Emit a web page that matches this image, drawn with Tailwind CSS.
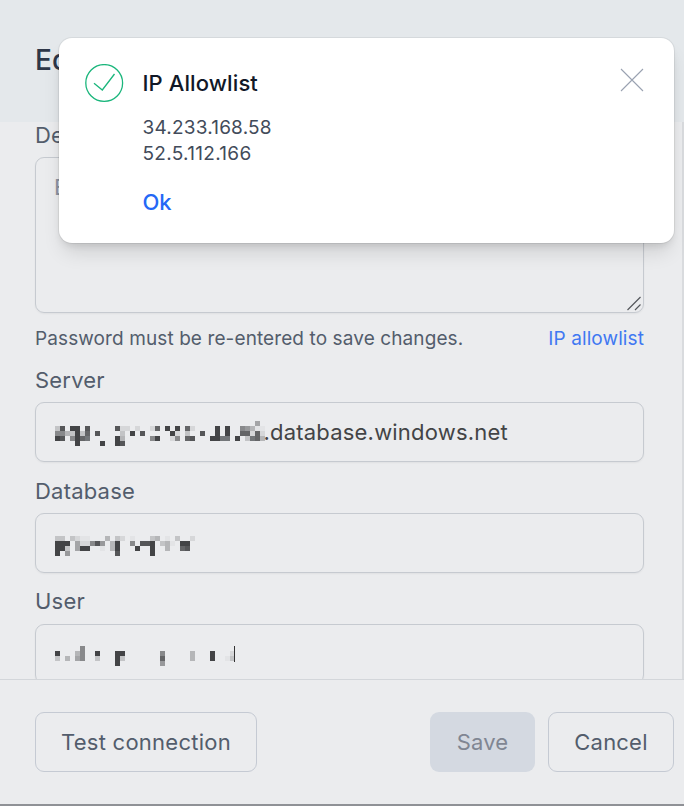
<!DOCTYPE html>
<html lang="en">
<head>
<meta charset="utf-8">
<title>Edit connection</title>
<script src="https://cdn.jsdelivr.net/npm/@tailwindcss/browser@4"></script>
</head>
<body class="relative flex h-[806px] w-[684px] flex-col overflow-hidden bg-[#ebecee] font-['Inter',sans-serif] text-[22px] leading-[30px] tracking-[0.2px] text-[#535d6c]">
  <header class="h-[122px] shrink-0 bg-[#e4e8eb] pl-[35px] pt-[42px]">
    <h1 class="text-[28px] font-medium leading-9 text-[#2d3748]">Edit</h1>
  </header>

  <main class="flex h-[557px] shrink-0 flex-col overflow-hidden border-r-2 border-[#d9dbde] pl-[35px] pr-[38px]">
    <label class="-mt-0.5 h-[37px] shrink-0">Description</label>
    <div class="relative h-[156px] shrink-0 rounded-[9px] border border-[#c6cad0] px-[18px] pt-[14px] text-[#8b93a1] shadow-xs">Enter
      <svg class="absolute bottom-px right-px" width="15" height="15" viewBox="0 0 15 15" fill="none" stroke="#55585c" stroke-width="1.2"><path d="M.5 14 13.5 1M8 14 13.5 8.5"/></svg>
    </div>
    <div class="mt-[11px] flex h-[30px] shrink-0 justify-between text-[19px] tracking-[0.1px]">
      <span>Password must be re-entered to save changes.</span><a class="text-[#4078f2]">IP allowlist</a>
    </div>
    <label class="mt-[11px] h-[37px] shrink-0">Server</label>
    <div class="flex h-[60px] shrink-0 items-center rounded-[9px] border border-[#c6cad0] pl-[19px] text-[#434446] shadow-xs">
      <svg class="mt-[3px]" data-mosaic="server" width="210" height="25" viewBox="0 0 42 5" shape-rendering="crispEdges"></svg><span class="-ml-[1.5px]">.database.windows.net</span>
    </div>
    <label class="mt-[14px] h-[37px] shrink-0">Database</label>
    <div class="flex h-[60px] shrink-0 items-center rounded-[9px] border border-[#c6cad0] pl-[19px] pt-[6px] shadow-xs">
      <svg data-mosaic="database" width="210" height="20" viewBox="0 0 42 4" shape-rendering="crispEdges"></svg>
    </div>
    <label class="mt-[13px] h-[38px] shrink-0">User</label>
    <div class="flex h-[60px] shrink-0 items-center rounded-[9px] border border-[#c6cad0] pl-[19px] pt-[4px] shadow-xs">
      <svg data-mosaic="user" width="210" height="20" viewBox="0 0 42 4" shape-rendering="crispEdges"></svg>
    </div>
  </main>

  <footer class="flex h-[127px] shrink-0 items-start border-b-2 border-t border-b-[#8f9196] border-t-[#d3d6da] pl-[35px] pr-[10px] pt-8">
    <button class="h-[60px] w-[222px] rounded-[9px] border border-[#c5cad3] tracking-[0.25px]">Test connection</button>
    <button class="ml-auto h-[60px] w-[105px] rounded-[9px] bg-[#d4d9e1] text-[#808692]">Save</button>
    <button class="ml-[13px] h-[60px] w-[126px] rounded-[9px] border border-[#c5cad3]">Cancel</button>
  </footer>

  <section class="absolute left-[59px] top-[38px] flex h-[205px] w-[615px] rounded-[13px] bg-white pl-[26px] pt-[26px] shadow-[0_0_0_1px_rgba(0,0,0,0.06),0_13px_20px_-4px_rgba(0,0,0,0.12),0_5px_8px_-3px_rgba(0,0,0,0.12)]">
    <svg class="shrink-0" width="39" height="39" viewBox="0 0 39 39" fill="none" stroke="#1bb67c" stroke-width="1.3"><circle cx="19.2" cy="19" r="18.4"/><path d="m9 19.3 8.3 6.7L29.5 10"/></svg>
    <div class="ml-[18.5px] flex flex-col">
      <h2 class="mt-1 font-medium tracking-[0.1px] text-[#111827]">IP Allowlist</h2>
      <p class="mt-[17px] text-[19px] leading-[26px] tracking-[0.2px] text-[#424b5a]">34.233.168.58<br><span class="tracking-[0.3px]">52.5.112.166</span></p>
      <a class="mt-[20px] font-medium tracking-normal text-[#2468f6]">Ok</a>
    </div>
    <svg class="absolute right-[30px] top-[30px]" width="24" height="24" viewBox="0 0 24 24" stroke="#9aa2b1" stroke-width="1.1"><path d="m1 1 22 22M23 1 1 23"/></svg>
  </section>

  <script>
    // Each row lists column:shade pairs; a shade is one hex digit of grey.
    const mosaics = {
      server: [
        '40:a',
        '0:c 1:5 3:4 4:4 6:5 12:5 13:d 14:d 16:d 19:d 20:6 22:4 24:4 26:6 27:d 32:4 34:4 37:8 38:9 39:b 40:e 41:e',
        '0:8 1:8 2:b 3:c 4:4 5:c 6:6 8:5 13:c 15:4 17:5 23:4 24:d 26:c 29:5 32:4 34:4 37:6 38:6 39:d 40:6 41:d',
        '0:4 1:5 3:8 4:4 5:6 6:7 12:4 13:b 19:8 20:4 23:d 24:8 26:6 27:5 31:4 32:4 33:7 34:7 36:4 38:c 39:7 40:6 41:b',
        '4:4 9:4 12:4 13:5'
      ],
      database: [
        '0:c 1:c 3:c 4:d 5:e 6:e 10:b 12:c 13:d 15:e 19:c 20:b 22:e 24:c 27:d',
        '0:4 1:4 2:4 4:a 5:d 6:d 7:8 8:5 9:9 11:b 12:4 15:8 17:5 18:5 19:4 21:c 22:b 23:e 25:4 26:4',
        '0:4 1:4 2:c 4:a 5:4 6:4 9:e 11:b 12:4 16:4 19:4 22:b 25:6 26:5',
        '0:4 2:9 12:5 19:4'
      ],
      user: [
        '5:8',
        '0:4 4:b 5:8 8:4 12:4 13:4 21:8 27:b 31:4 35:d',
        '0:c 2:b 4:a 5:8 8:c 12:4 13:c 21:6 27:b 31:4 34:e 35:c',
        '12:4 21:9'
      ]
    };
    const tone = { e: '#e3e4e6', d: '#d6d7d9', c: '#c3c4c6', b: '#b5b6b8', a: '#a4a5a7', 9: '#98999b', 8: '#88898b', 7: '#737679', 6: '#646567', 5: '#555658', 4: '#434446' };
    for (const svg of document.querySelectorAll('[data-mosaic]')) {
      const rects = mosaics[svg.dataset.mosaic].flatMap((row, y) => row.split(' ').map(cell => {
        const [x, shade] = cell.split(':');
        return `<rect x="${x}" y="${y}" width="1" height="1" fill="${tone[shade]}"/>`;
      }));
      if (svg.dataset.mosaic === 'user') rects.push('<rect x="35.8" y="0" width=".2" height="3.2" fill="#333"/>');
      svg.innerHTML = rects.join('');
    }
  </script>
</body>
</html>
